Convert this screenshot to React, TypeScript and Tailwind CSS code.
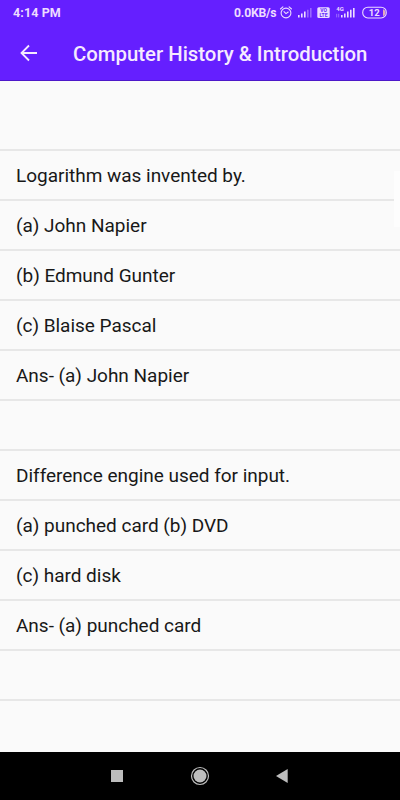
const rows = [
  "",
  "Logarithm was invented by.",
  "(a) John Napier",
  "(b) Edmund Gunter",
  "(c) Blaise Pascal",
  "Ans- (a) John Napier",
  "",
  "Difference engine used for input.",
  "(a) punched card (b) DVD",
  "(c) hard disk",
  "Ans- (a) punched card",
  "",
];

function StatusIcons() {
  return (
    <svg className="block h-[26px] w-[112px] shrink-0" viewBox="278 0 112 26" fill="none">
      <g stroke="#eddcff" strokeWidth="1.1" strokeLinecap="round" strokeLinejoin="round">
        <circle cx="286" cy="13" r="4.9" />
        <path d="M280.5 9l2.4-2.1M291.5 9l-2.4-2.1M284 11.6l2 2 2.2-1.6" />
      </g>
      <g fill="#eddcff">
        <path d="M298 15h1.6v2.4H298zM301 13.4h1.6v4H301zM304 11.6h1.6v5.8H304z" />
        <path d="M307 9.8h1.6v7.6H307zM310 8h1.6v9.4H310z" opacity=".38" />
        <rect x="317.3" y="7.3" width="12.4" height="10.8" rx="1.5" />
        <path d="M341 15h1.6v2.4H341zM344 13.4h1.6v4H344zM347 11.6h1.6v5.8H347zM350 9.8h1.6v7.6H350zM353 8h1.6v9.4H353z" />
        <path d="M336.7 13.8v3.6M338.7 13.8v3.6" stroke="#eddcff" strokeWidth=".8" opacity=".5" />
        <path d="M383 9.2c3.2.7 3.2 6.2 0 6.9z" fill="#e5aabb" />
      </g>
      <rect x="362.7" y="7.2" width="23.6" height="10.8" rx="5.2" stroke="#eddcff" strokeWidth="1.1" />
      <g fontFamily="Roboto, sans-serif" fontWeight="700">
        <text x="323.5" y="12.3" fontSize="5" textAnchor="middle" fill="#611ffc">VO</text>
        <text x="323.5" y="17" fontSize="5" textAnchor="middle" fill="#611ffc">LTE</text>
        <text x="336.3" y="11" fontSize="6" fill="#eddcff">4G</text>
        <text x="374.3" y="16.1" fontSize="9.5" textAnchor="middle" fill="#eddcff">12</text>
      </g>
    </svg>
  );
}

export default function App() {
  return (
    <div className="flex h-[800px] w-[400px] flex-col overflow-hidden bg-[#fafafa] font-[Roboto,sans-serif]">
      <header className="h-[81px] shrink-0 border-b border-[#4d18c9] bg-[#651fff] text-[#f5eaff]">
        <div className="flex h-[26px] items-center pl-[13px] font-bold text-[#eddcff]">
          <span className="w-[221px] shrink-0 text-[12.5px] tracking-[0.1px]">4:14 PM</span>
          <span className="w-11 shrink-0 whitespace-nowrap text-[12.2px] tracking-[-0.2px]">0.0KB/s</span>
          <StatusIcons />
        </div>
        <div className="flex h-[54px] items-center pl-5">
          <svg className="size-[18px] shrink-0" viewBox="0 0 18 18" fill="none" stroke="currentColor" strokeWidth="1.8">
            <path d="M17 9H2M9 1.5L1.5 9 9 16.5" />
          </svg>
          <h1 className="ml-[35px] whitespace-nowrap pt-0.5 text-[20.35px] font-medium">Computer History &amp; Introduction</h1>
        </div>
      </header>
      <main className="relative flex-1 overflow-hidden">
        <div className="h-5" />
        {rows.map((text, i) => (
          <div key={i} className="flex h-[50px] items-center border-b-2 border-[#e7e7e7] pl-4 pt-0.5 text-[19px] text-[#181818] whitespace-nowrap">
            <span className="tracking-[-0.02px]">{text}</span>
          </div>
        ))}
        <div className="absolute right-0 top-[90px] h-[56px] w-1.5 bg-[#fdfdfd]" />
      </main>
      <nav className="flex h-12 shrink-0 bg-black">
        <svg className="h-12 w-full" viewBox="0 0 400 48" fill="#bdbdbd">
          <rect x="111" y="18" width="12" height="12" />
          <circle cx="200" cy="24" r="6.5" />
          <circle cx="200" cy="24" r="8.5" fill="none" stroke="#bdbdbd" strokeWidth="1.2" />
          <path d="M276 24l11.7-7v14z" />
        </svg>
      </nav>
    </div>
  );
}
